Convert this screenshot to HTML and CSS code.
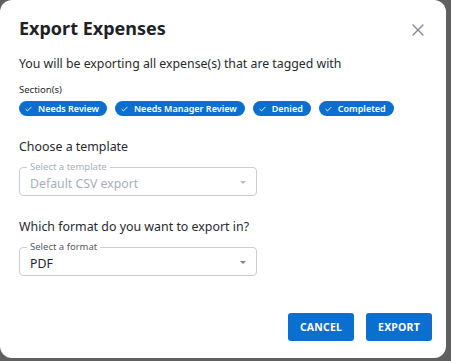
FILE: index.html
```html
<!DOCTYPE html>
<html lang="en">
<head>
    <meta charset="UTF-8">
    <meta name="viewport" content="width=device-width, initial-scale=1.0">
    <title>Export Expenses</title>
    <link rel="stylesheet" href="styles.css">
</head>
<body>
    <div class="dialog">
        <!-- Header -->
        <div class="dialog-header">
            <h2 class="dialog-title">Export Expenses</h2>
            <button class="close-btn" aria-label="Close">
                <svg width="12" height="12" viewBox="0 0 12 12">
                    <path d="M1 1L11 11M11 1L1 11" stroke="#7d8592" stroke-width="1.3" stroke-linecap="round"/>
                </svg>
            </button>
        </div>

        <p class="intro">You will be exporting all expense(s) that are tagged with</p>

        <!-- Sections -->
        <div class="small-label">Section(s)</div>
        <div class="chips">
            <span class="chip"><svg class="check" width="7" height="6" viewBox="0 0 7 6"><path d="M0.6 3.1L2.5 4.9L6.4 0.9" fill="none" stroke="#fff" stroke-width="0.9"/></svg>Needs Review</span>
            <span class="chip"><svg class="check" width="7" height="6" viewBox="0 0 7 6"><path d="M0.6 3.1L2.5 4.9L6.4 0.9" fill="none" stroke="#fff" stroke-width="0.9"/></svg>Needs Manager Review</span>
            <span class="chip"><svg class="check" width="7" height="6" viewBox="0 0 7 6"><path d="M0.6 3.1L2.5 4.9L6.4 0.9" fill="none" stroke="#fff" stroke-width="0.9"/></svg>Denied</span>
            <span class="chip"><svg class="check" width="7" height="6" viewBox="0 0 7 6"><path d="M0.6 3.1L2.5 4.9L6.4 0.9" fill="none" stroke="#fff" stroke-width="0.9"/></svg>Completed</span>
        </div>

        <!-- Template -->
        <div class="field-title">Choose a template</div>
        <div class="select disabled">
            <span class="select-label">Select a template</span>
            <span class="select-value">Default CSV export</span>
            <span class="caret"></span>
        </div>

        <!-- Format -->
        <div class="field-title">Which format do you want to export in?</div>
        <div class="select">
            <span class="select-label">Select a format</span>
            <span class="select-value">PDF</span>
            <span class="caret"></span>
        </div>

        <!-- Footer -->
        <div class="dialog-footer">
            <button class="btn">CANCEL</button>
            <button class="btn">EXPORT</button>
        </div>
    </div>
</body>
</html>
```

FILE: styles.css
```css
* {
    margin: 0;
    padding: 0;
    box-sizing: border-box;
}

body {
    font-family: "Noto Sans", "Open Sans", sans-serif;
    background: #5f5f5f;
    color: #222;
    width: 451px;
    height: 361px;
    overflow: hidden;
}

.dialog {
    width: 446px;
    height: 358px;
    background: #ffffff;
    border-radius: 12px;
    padding: 15px 22px 0 19px;
}

/* Header */
.dialog-header {
    display: flex;
    align-items: center;
    justify-content: space-between;
}

.dialog-title {
    font-size: 18px;
    line-height: 26px;
    font-weight: 700;
    color: #1e2226;
}

.close-btn {
    background: none;
    border: none;
    width: 12px;
    height: 12px;
    display: flex;
    margin-top: 4px;
    cursor: pointer;
}

.intro {
    font-size: 12.3px;
    line-height: 18px;
    color: #262a2e;
    margin-top: 14px;
}

.small-label {
    font-size: 9.5px;
    line-height: 13px;
    color: #262a2e;
    margin-top: 10px;
}

/* Chips */
.chips {
    display: flex;
    gap: 8px;
    margin-top: 5px;
}

.chip {
    display: inline-flex;
    align-items: center;
    height: 15px;
    padding: 0 8px 0 6px;
    border-radius: 8px;
    background: #0a6fcf;
    color: #ffffff;
    font-size: 9px;
    font-weight: 600;
    white-space: nowrap;
}

.check {
    margin-right: 6px;
}

/* Select fields */
.field-title {
    font-size: 12.4px;
    line-height: 18px;
    color: #262a2e;
    margin-top: 22px;
}

.select {
    position: relative;
    width: 238px;
    height: 29px;
    margin-top: 11px;
    border: 1px solid #c9cdd2;
    border-radius: 4px;
    display: flex;
    align-items: center;
    padding: 4px 10px 0 10px;
}

.select-label {
    position: absolute;
    top: -7px;
    left: 7px;
    padding: 0 3px;
    background: #ffffff;
    font-size: 9.5px;
    line-height: 12px;
    color: #555b62;
}

.select-value {
    flex: 1;
    font-size: 12.3px;
    line-height: 18px;
    color: #1e2226;
}

.caret {
    width: 0;
    height: 0;
    border-left: 3.5px solid transparent;
    border-right: 3.5px solid transparent;
    border-top: 3.5px solid #7d8592;
    margin-top: -2px;
}

.select.disabled .select-label,
.select.disabled .select-value {
    color: #a9afb8;
}

.select.disabled .caret {
    border-top-color: #b8bec6;
}

/* Footer */
.dialog-footer {
    display: flex;
    justify-content: flex-end;
    gap: 12px;
    margin-top: 37px;
    margin-right: -8px;
}

.btn {
    width: 66px;
    height: 28px;
    border: none;
    border-radius: 3px;
    background: #0a6fcf;
    color: #ffffff;
    font-family: "Noto Sans", "Open Sans", sans-serif;
    font-size: 10.5px;
    font-weight: 700;
    letter-spacing: 0.2px;
    cursor: pointer;
}
```
